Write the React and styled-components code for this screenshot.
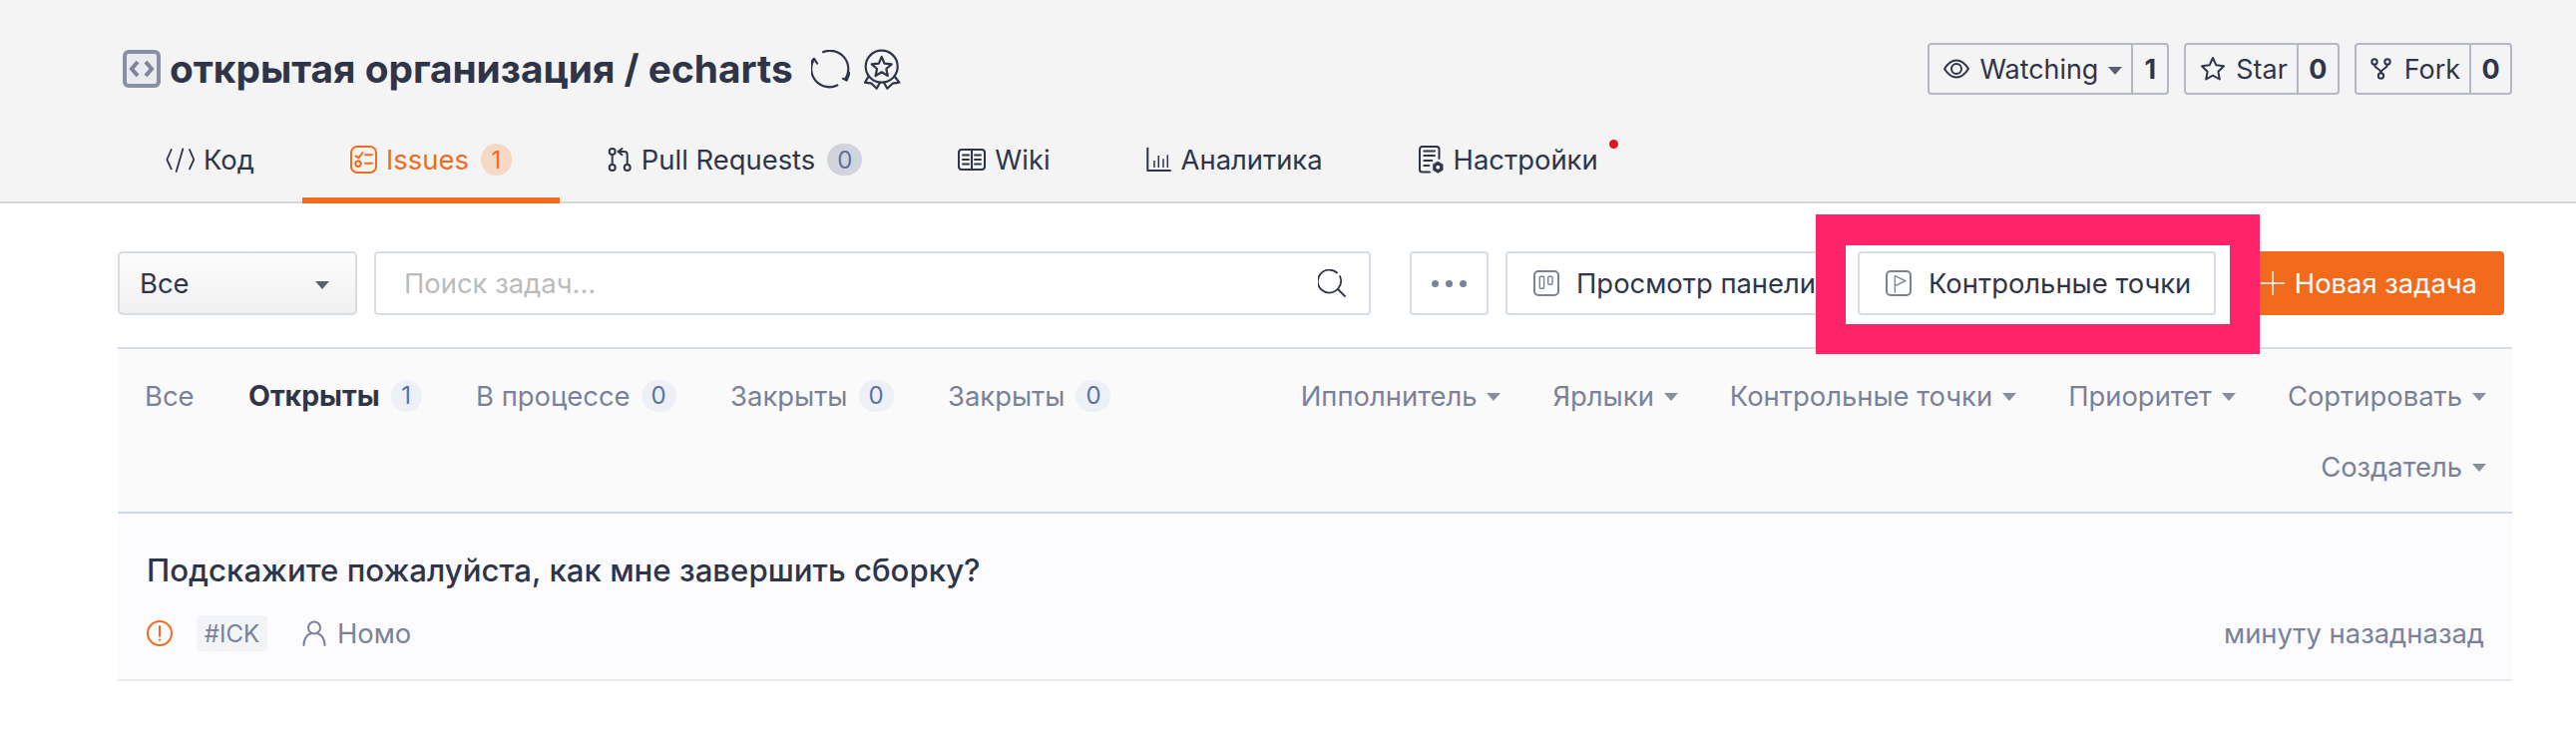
import React from "react";
import styled, { createGlobalStyle } from "styled-components";

const GlobalStyle = createGlobalStyle`
    html, body {
        margin: 0;
        padding: 0;
        background: #fff;
        font-family: Inter, "Noto Sans", sans-serif;
        color: #2f3549;
    }
    * { box-sizing: border-box; }
`;

const Page = styled.div`
    width: 2582px;
    height: 738px;
    overflow: hidden;
`;

const Header = styled.header`
    height: 204px;
    padding: 43px 64px 0 118px;
    background: #f4f4f4;
    border-bottom: 2px solid #d8d8d8;
`;

const TitleRow = styled.div`
    display: flex;
    align-items: center;
    justify-content: space-between;
    height: 52px;
`;

const RepoTitle = styled.div`
    display: flex;
    align-items: center;
    padding-left: 5px;
`;

const RepoName = styled.h1`
    margin: 0 18px 0 9px;
    font-size: 38.8px;
    font-weight: 700;
    line-height: 44px;
    white-space: nowrap;
`;

const RepoActions = styled.div`
    display: flex;
    gap: 15px;
`;

const ActionGroup = styled.div`
    display: flex;
    align-items: center;
    height: 52px;
    border: 2px solid #b5b8c5;
    border-radius: 4px;
    font-size: 26.9px;
`;

const ActionMain = styled.div`
    display: flex;
    align-items: center;
    gap: 10px;
    height: 100%;
    padding: 0 9px 0 14px;
`;

const ActionCount = styled.div`
    display: flex;
    align-items: center;
    justify-content: center;
    width: ${(p) => p.$width}px;
    height: 100%;
    border-left: 2px solid #b5b8c5;
    font-weight: 700;
`;

const Caret = styled.span`
    display: inline-block;
    width: 0;
    height: 0;
    margin-top: 3px;
    border-left: 7px solid transparent;
    border-right: 7px solid transparent;
    border-top: 8px solid ${(p) => p.$color || "#8a8f9f"};
`;

const Nav = styled.nav`
    display: flex;
    margin-top: 21px;
    margin-bottom: -2px;
`;

const Tab = styled.div`
    position: relative;
    display: flex;
    align-items: center;
    height: 88px;
    padding: 6px 48px 0;
    gap: 9px;
    font-size: 27.4px;
    white-space: nowrap;
    color: ${(p) => (p.$active ? "#f26b1d" : "#2f3549")};
    border-bottom: 6px solid ${(p) => (p.$active ? "#f26b1d" : "transparent")};
`;

const TabBadge = styled.span`
    display: flex;
    align-items: center;
    justify-content: center;
    min-width: ${(p) => (p.$active ? 31 : 35)}px;
    height: 32px;
    margin-left: 3px;
    border-radius: 16px;
    font-size: 24px;
    background: ${(p) => (p.$active ? "#f5d9c4" : "#d0d4dc")};
    color: ${(p) => (p.$active ? "#f26b1d" : "#5f7199")};
`;

const RedDot = styled.span`
    position: absolute;
    top: 24px;
    right: 28px;
    width: 9px;
    height: 9px;
    border-radius: 50%;
    background: #e0161b;
`;

const Main = styled.main`
    padding: 0 64px 0 118px;
`;

const Toolbar = styled.div`
    display: flex;
    align-items: center;
    height: 64px;
    margin-top: 48px;
    margin-bottom: 32px;
    padding-right: 8px;
`;

const Select = styled.div`
    display: flex;
    flex: none;
    align-items: center;
    justify-content: space-between;
    width: 240px;
    height: 64px;
    padding: 0 26px 0 20px;
    border: 2px solid #d5dde6;
    border-radius: 5px;
    background: linear-gradient(#fdfdfd, #f0f0f0);
    font-size: 27.4px;
`;

const Search = styled.div`
    display: flex;
    flex: 1;
    align-items: center;
    justify-content: space-between;
    height: 64px;
    margin: 0 39px 0 17px;
    padding: 0 23px 0 28px;
    border: 2px solid #d5dde6;
    border-radius: 4px;
    font-size: 27.4px;
    color: #bbbbbb;
`;

const Button = styled.div`
    position: relative;
    z-index: ${(p) => (p.$raised ? 2 : 0)};
    display: flex;
    flex: none;
    align-items: center;
    gap: 17px;
    width: ${(p) => p.$width}px;
    height: 64px;
    padding-left: 26px;
    overflow: hidden;
    white-space: nowrap;
    border: 2px solid #d5dde6;
    border-radius: 4px;
    background: #fff;
    font-size: 27.4px;
`;

const MoreButton = styled.div`
    display: flex;
    flex: none;
    align-items: center;
    justify-content: center;
    gap: 7px;
    width: 79px;
    height: 64px;
    margin-right: 17px;
    border: 2px solid #d5dde6;
    border-radius: 4px;
`;

const Dot = styled.span`
    width: 7px;
    height: 7px;
    border-radius: 50%;
    background: #7a8199;
`;

const MilestoneSlot = styled.div`
    position: relative;
    flex: none;
    margin: 0 16px;
`;

const HighlightFrame = styled.div`
    position: absolute;
    z-index: 1;
    top: -37px;
    bottom: -39px;
    left: -42px;
    right: -44px;
    border: solid #ff2469;
    border-width: 31px 30px 30px;
    background: #fff;
`;

const NewButton = styled.div`
    display: flex;
    flex: none;
    align-items: center;
    justify-content: flex-end;
    gap: 10px;
    width: 273px;
    height: 64px;
    padding-right: 27px;
    border-radius: 4px;
    background: #f26b1d;
    color: #fff;
    font-size: 27.4px;
    white-space: nowrap;
`;

const FilterBar = styled.div`
    display: flex;
    align-items: flex-start;
    justify-content: space-between;
    height: 167px;
    padding: 11px 26px 0 27px;
    border-top: 2px solid #d5dde6;
    border-bottom: 2px solid #d0dae4;
    background: #fafafa;
`;

const StateTabs = styled.div`
    display: flex;
    align-items: center;
    gap: 54.5px;
    height: 71px;
`;

const StateTab = styled.div`
    display: flex;
    align-items: center;
    gap: 11px;
    font-size: ${(p) => (p.$active ? 28.4 : 27.4)}px;
    white-space: nowrap;
    font-weight: ${(p) => (p.$active ? 700 : 400)};
    color: ${(p) => (p.$active ? "#2f3549" : "#7a8199")};
`;

const StateCount = styled.span`
    display: flex;
    align-items: center;
    justify-content: center;
    min-width: ${(p) => p.$width}px;
    height: 32px;
    border-radius: 16px;
    font-size: 24px;
    font-weight: 400;
    background: #edf0f7;
    color: #5f7199;
`;

const Filters = styled.div`
    display: flex;
    flex-wrap: wrap;
    justify-content: flex-end;
    width: 1215px;
    column-gap: 52px;
`;

const Filter = styled.div`
    display: flex;
    align-items: center;
    gap: 10px;
    height: 71px;
    font-size: 27.4px;
    white-space: nowrap;
    color: #7a8199;
`;

const IssueRow = styled.div`
    height: 168px;
    padding: 36px 28px 0 29px;
    border-bottom: 2px solid #e8ecf0;
    background: #fcfcfe;
`;

const IssueTitle = styled.div`
    height: 42px;
    font-size: 31.2px;
    font-weight: 500;
    line-height: 42px;
`;

const IssueMeta = styled.div`
    display: flex;
    align-items: center;
    justify-content: space-between;
    height: 38px;
    margin-top: 23px;
    font-size: 27.4px;
    color: #7a8199;
`;

const MetaLeft = styled.div`
    display: flex;
    align-items: center;
`;

const Tag = styled.span`
    display: flex;
    align-items: center;
    justify-content: center;
    width: 71px;
    height: 36px;
    margin: 0 35px 0 24px;
    border-radius: 4px;
    background: #f3f4f6;
    font-size: 24px;
`;

const Author = styled.span`
    display: flex;
    align-items: center;
    gap: 11px;
`;

const Spacer = styled.span`
    width: 12px;
`;

const Icon = ({ size = 26, height, children, fill = "none", stroke = "currentColor", sw = 2 }) => (
    <svg
        width={size}
        height={height || size}
        viewBox={`0 0 ${size} ${height || size}`}
        fill={fill}
        stroke={stroke}
        strokeWidth={sw}
        strokeLinecap="round"
        strokeLinejoin="round"
        style={{ flex: "none" }}
    >
        {children}
    </svg>
);

const RepoIcon = () => (
    <Icon size={38}>
        <rect x="2" y="2" width="34" height="34" rx="4" fill="#eaebef" stroke="#8a90a4" strokeWidth="4" />
        <path d="M15 12l-6 7 6 7M23 12l6 7-6 7" stroke="#7f8598" strokeWidth="4" strokeLinecap="butt" strokeLinejoin="miter" />
    </Icon>
);

const SyncIcon = () => (
    <Icon size={39} stroke="#2f3549" sw={2.2}>
        <path d="M12 2.200A18.300 18.300 0 0 1 34.700 28.500" />
        <path d="M26.300 35.500A18.300 18.300 0 0 1 2.500 10" />
        <path d="M32 28.800l3.700 1.700 3-7.700M0.500 12L3 8.800l3 4.700" />
    </Icon>
);

const AwardIcon = () => (
    <Icon size={40} height={41} stroke="#2f3549" sw={2.2}>
        <circle cx="19.700" cy="17.700" r="16" />
        <path d="M19.700 8l2.800 6.600 7.200.7-5.400 4.700 1.600 7-6.200-3.700-6.200 3.700 1.600-7-5.400-4.700 7.200-.7z" />
        <path d="M6.300 28L3 33.700l6.700 1 5 5L18 33.700M33 28l4.300 5.700-6.600 1-5.400 5L22 33.700" />
    </Icon>
);

const EyeIcon = () => (
    <Icon size={26} stroke="#2f3549">
        <path d="M1 13C5 6.500 9 4.500 13 4.500s8 2 12 8.500c-4 6.500-8 8.500-12 8.500S5 19.500 1 13z" />
        <circle cx="13" cy="13" r="5" />
    </Icon>
);

const StarIcon = () => (
    <Icon size={26} stroke="#2f3549">
        <path d="M13 2l3.400 7.300 7.600 1-5.600 5.400 1.400 7.800L13 19.700l-6.800 3.800 1.400-7.800L2 10.300l7.600-1z" />
    </Icon>
);

const ForkIcon = () => (
    <Icon size={24} height={22} stroke="#2f3549">
        <circle cx="4" cy="4" r="2.700" />
        <circle cx="17" cy="4" r="2.700" />
        <circle cx="10.500" cy="18" r="2.700" />
        <path d="M4 6.700c0 4.300 6.500 3.800 6.500 8.600M17 6.700c0 4.300-6.500 3.800-6.500 8.600" />
    </Icon>
);

const CodeIcon = () => (
    <Icon size={29} stroke="#2f3549" sw={1.800}>
        <path d="M5.700 4L1.300 14l4.400 9.300M24 4l4.300 10L24 23.300M17.300 3.300L10.700 26" />
    </Icon>
);

const IssuesIcon = () => (
    <Icon size={27} height={28} stroke="#f26b1d">
        <rect x="1" y="1" width="25" height="26" rx="6" />
        <path d="M5.500 10.300l3 2 4-5.300M15 9.300h7M15 17.700h7" />
        <circle cx="8" cy="18.300" r="2.700" />
    </Icon>
);

const PullIcon = () => (
    <Icon size={25} height={24} stroke="#2f3549">
        <circle cx="4.700" cy="4" r="3" />
        <circle cx="4.700" cy="20" r="3" />
        <circle cx="19.700" cy="20" r="3" />
        <path d="M4.700 7.300v9.500M19.700 16.700V7a3 3 0 0 0-3-3h-6M14.500 1l-4 3 4 3.200" />
    </Icon>
);

const WikiIcon = () => (
    <Icon size={28} height={22} stroke="#2f3549">
        <rect x="1" y="1" width="26" height="20" rx="3" />
        <path d="M14 1v20M5 6.500h6M5 11h6M5 15.500h6M17 6.500h6M17 11h6M17 15.500h6" />
    </Icon>
);

const ChartIcon = () => (
    <Icon size={26} stroke="#2f3549">
        <path d="M1.300 1v23h23.500" strokeLinecap="butt" />
        <path d="M8 14v7M12.300 9v12M17 12.300V21M21.300 8.300V21" strokeWidth="1.500" strokeLinecap="butt" />
    </Icon>
);

const SettingsIcon = () => (
    <Icon size={26} height={28} stroke="#2f3549">
        <path d="M11 26.500H3.500A2.500 2.500 0 0 1 1 24V3.500A2.500 2.500 0 0 1 3.500 1H18a2.500 2.500 0 0 1 2.500 2.500V13" />
        <path d="M5.300 5.500H16M5.300 10H16M5.300 15h8M5.300 20h5" />
        <path d="M19.300 16l4.900 2.900v5.600l-4.900 2.900-4.900-2.900v-5.600z" fill="#2f3549" strokeWidth="0.500" />
        <circle cx="19.300" cy="21.700" r="2" fill="#f4f4f4" stroke="none" />
    </Icon>
);

const SearchIcon = () => (
    <Icon size={28} stroke="#2f3549" sw={1.800}>
        <path d="M19 3.500A11.500 11.500 0 1 0 20.500 19 11.500 11.500 0 0 0 22 7" />
        <path d="M20 20l7 7" />
    </Icon>
);

const BoardIcon = () => (
    <Icon size={26} stroke="#7a8199">
        <rect x="1" y="1" width="24" height="24" rx="4" />
        <rect x="6.300" y="6.300" width="4.300" height="12" rx="1" strokeWidth="1.400" />
        <rect x="14.700" y="6.300" width="4.300" height="8" rx="1" strokeWidth="1.400" />
    </Icon>
);

const FlagIcon = () => (
    <Icon size={26} stroke="#7a8199">
        <rect x="1" y="1" width="24" height="24" rx="4" />
        <path d="M9.300 22.300V5.700L20 10.700l-10.700 5" strokeWidth="1.300" />
    </Icon>
);

const AlertIcon = () => (
    <Icon size={26} stroke="#f26b1d">
        <circle cx="13" cy="13" r="12" />
        <path d="M13 6v10M13 19.500v.5" />
    </Icon>
);

const PersonIcon = () => (
    <Icon size={24} height={26} stroke="#7a8199">
        <circle cx="12" cy="7.500" r="6" />
        <path d="M1.500 25c0-6 3-10.500 6.500-11.500M22.500 25c0-6-3-10.500-6.500-11.500" />
    </Icon>
);

const PlusIcon = () => (
    <Icon size={24} stroke="#fff" sw={1.500}>
        <path d="M12 0v24M0 12h24" strokeLinecap="butt" />
    </Icon>
);

const stateTabs = [
    { label: "Открыты", count: 1, width: 31, active: true },
    { label: "В процессе", count: 0, width: 35 },
    { label: "Закрыты", count: 0, width: 35 },
    { label: "Закрыты", count: 0, width: 35 },
];

const filters = ["Ипполнитель", "Ярлыки", "Контрольные точки", "Приоритет", "Сортировать", "Создатель"];

export default function App() {
    return (
        <Page>
            <GlobalStyle />
            <Header>
                <TitleRow>
                    <RepoTitle>
                        <RepoIcon />
                        <RepoName>открытая организация / echarts</RepoName>
                        <SyncIcon />
                        <Spacer />
                        <AwardIcon />
                    </RepoTitle>
                    <RepoActions>
                        <ActionGroup>
                            <ActionMain>
                                <EyeIcon />
                                Watching
                                <Caret $color="#5c6070" />
                            </ActionMain>
                            <ActionCount $width={36}>1</ActionCount>
                        </ActionGroup>
                        <ActionGroup>
                            <ActionMain>
                                <StarIcon />
                                Star
                            </ActionMain>
                            <ActionCount $width={41}>0</ActionCount>
                        </ActionGroup>
                        <ActionGroup>
                            <ActionMain>
                                <ForkIcon />
                                Fork
                            </ActionMain>
                            <ActionCount $width={41}>0</ActionCount>
                        </ActionGroup>
                    </RepoActions>
                </TitleRow>
                <Nav>
                    <Tab><CodeIcon />Код</Tab>
                    <Tab $active><IssuesIcon />Issues<TabBadge $active>1</TabBadge></Tab>
                    <Tab><PullIcon />Pull Requests<TabBadge>0</TabBadge></Tab>
                    <Tab><WikiIcon />Wiki</Tab>
                    <Tab><ChartIcon />Аналитика</Tab>
                    <Tab><SettingsIcon />Настройки<RedDot /></Tab>
                </Nav>
            </Header>
            <Main>
                <Toolbar>
                    <Select>
                        Все
                        <Caret $color="#5c6070" />
                    </Select>
                    <Search>
                        Поиск задач...
                        <SearchIcon />
                    </Search>
                    <MoreButton>
                        <Dot /><Dot /><Dot />
                    </MoreButton>
                    <Button $width={337}>
                        <BoardIcon />
                        Просмотр панели
                    </Button>
                    <MilestoneSlot>
                        <HighlightFrame />
                        <Button $width={359} $raised>
                            <FlagIcon />
                            Контрольные точки
                        </Button>
                    </MilestoneSlot>
                    <NewButton>
                        <PlusIcon />
                        Новая задача
                    </NewButton>
                </Toolbar>
                <FilterBar>
                    <StateTabs>
                        <StateTab>Все</StateTab>
                        {stateTabs.map((t, i) => (
                            <StateTab key={i} $active={t.active}>
                                {t.label}
                                <StateCount $width={t.width}>{t.count}</StateCount>
                            </StateTab>
                        ))}
                    </StateTabs>
                    <Filters>
                        {filters.map((f) => (
                            <Filter key={f}>
                                {f}
                                <Caret />
                            </Filter>
                        ))}
                    </Filters>
                </FilterBar>
                <IssueRow>
                    <IssueTitle>Подскажите пожалуйста, как мне завершить сборку?</IssueTitle>
                    <IssueMeta>
                        <MetaLeft>
                            <AlertIcon />
                            <Tag>#ICK</Tag>
                            <Author>
                                <PersonIcon />
                                Номо
                            </Author>
                        </MetaLeft>
                        <span>минуту назадназад</span>
                    </IssueMeta>
                </IssueRow>
            </Main>
        </Page>
    );
}
